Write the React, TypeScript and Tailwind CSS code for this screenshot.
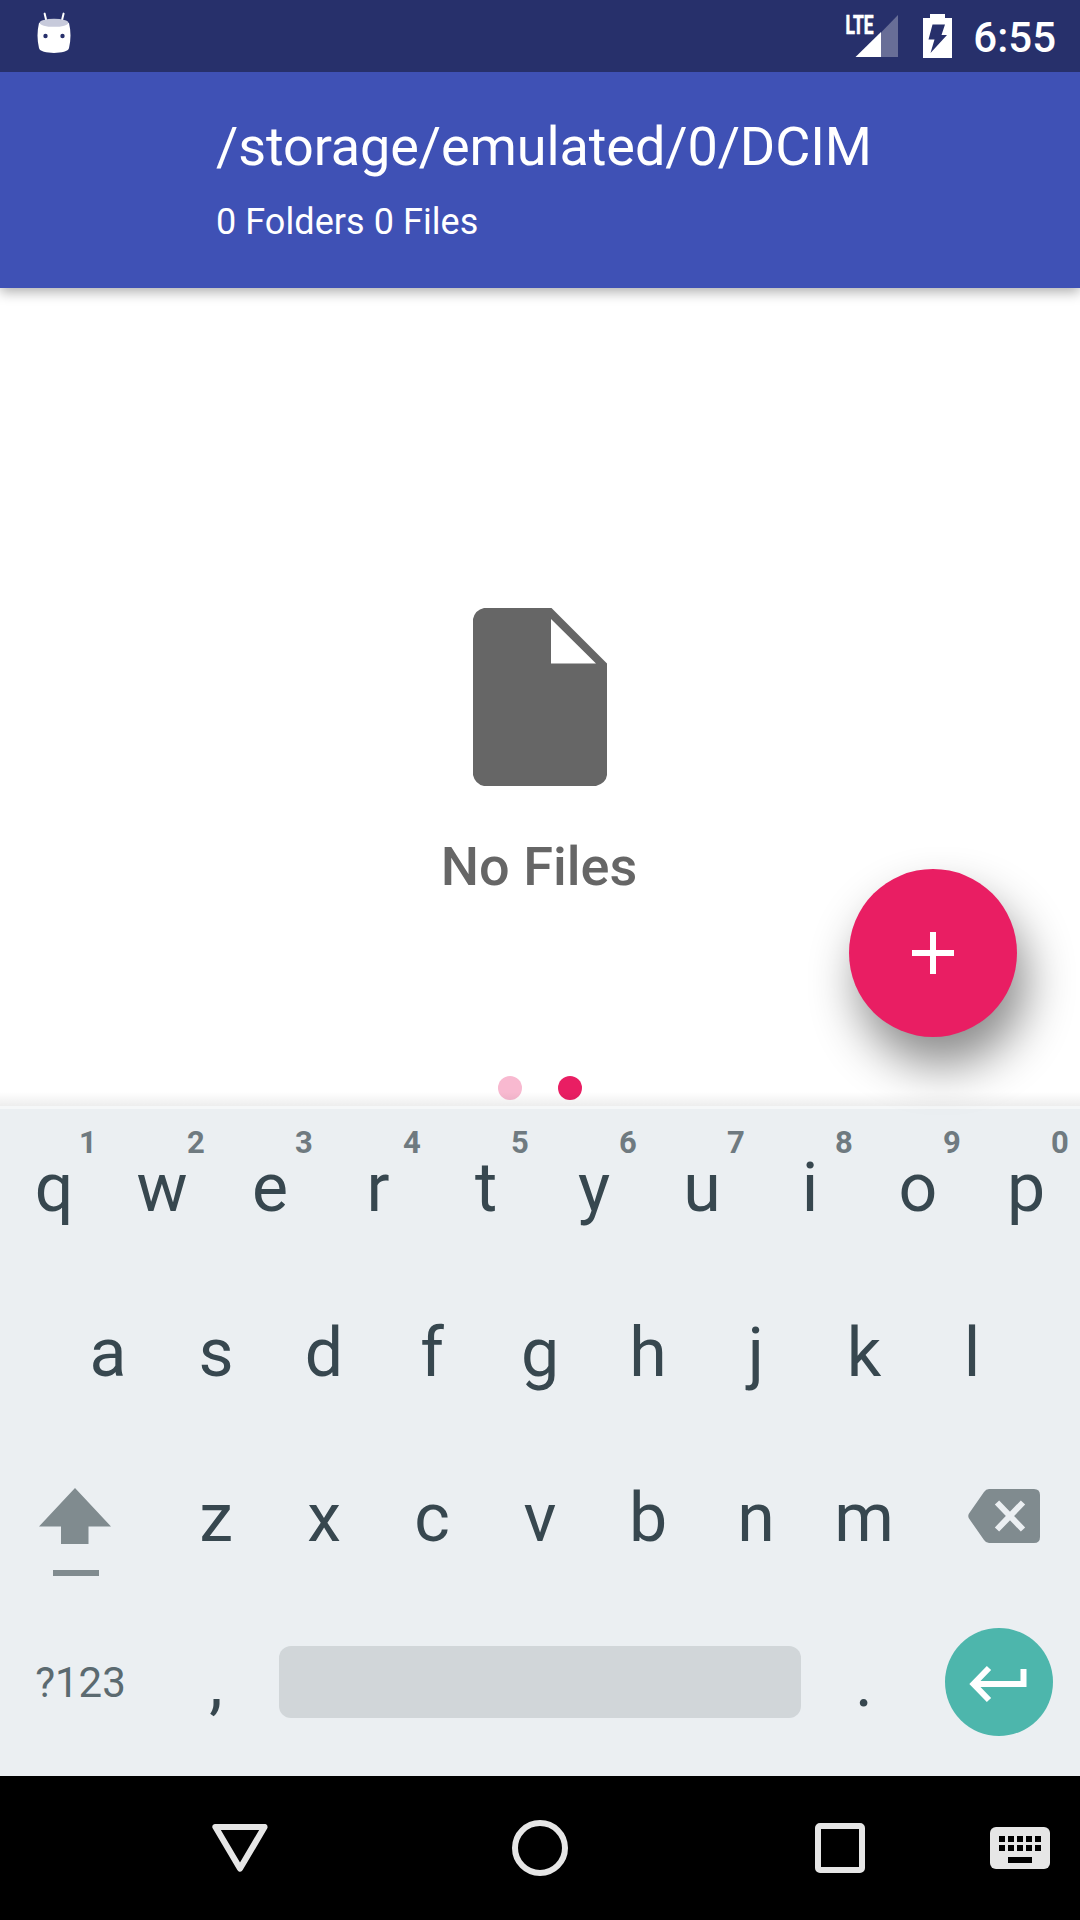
import type { ReactNode } from "react";

const TOP_ROW = ["q", "w", "e", "r", "t", "y", "u", "i", "o", "p"];
const HOME_ROW = ["a", "s", "d", "f", "g", "h", "j", "k", "l"];
const BOTTOM_ROW = ["z", "x", "c", "v", "b", "n", "m"];

function Key({ label, hint }: { label: string; hint?: string }) {
  return (
    <div className="relative flex h-full w-[108px] items-center justify-center text-[68px] leading-[80px]">
      {label}
      {hint && (
        <span className="absolute top-[16px] right-0 w-[40px] text-center text-[31px] leading-[36px] font-bold text-[#6f7a80]">
          {hint}
        </span>
      )}
    </div>
  );
}

function KeyRow({ children }: { children: ReactNode }) {
  return <div className="flex h-[157px] items-center justify-center">{children}</div>;
}

function StatusBar() {
  return (
    <div className="relative z-20 flex h-[72px] items-center justify-between bg-[#27306b] pr-[24px] pl-[36px]">
      <svg width="36" height="44" viewBox="0 0 36 44" className="mb-[4px]">
        <path d="M8.6 1.6 10.4 9M27.6 1.6 25.8 9" stroke="#fff" strokeWidth="2" strokeLinecap="round" />
        <path d="M3 11C1 19 1 28 3 36C4 42.500 32 42.500 33 36C35 28 35 19 33 11Z" fill="#fff" />
        <ellipse cx="18" cy="10.800" rx="14.500" ry="4" fill="#c7cadb" />
        <circle cx="9.500" cy="24" r="2.200" fill="#27306b" />
        <circle cx="26.500" cy="24" r="2.200" fill="#27306b" />
      </svg>
      <div className="flex items-center">
        <svg width="56" height="64" viewBox="0 -10 56 64" className="mr-[23px]">
          <text
            x="1.500"
            y="19.500"
            textLength="28"
            lengthAdjust="spacingAndGlyphs"
            fill="#fff"
            stroke="#fff"
            strokeWidth="0.700"
            fontSize="26"
            fontWeight="700"
            fontFamily="Roboto, sans-serif"
          >
            LTE
          </text>
          <path d="M37 18.500 54 1V43H37Z" fill="#686e97" />
          <path d="M37 18V43H11.500Z" fill="#fff" />
        </svg>
        <svg width="29" height="44" viewBox="0 0 29 44" className="mr-[21px]">
          <path d="M7 0H22V4H29V44H0V4H7Z" fill="#fff" />
          <path d="M9.500 10.500H22L18.500 21H24L7.500 39L11.500 25.500H5.500Z" fill="#27306b" />
        </svg>
        <span className="mt-[3px] text-[42px] leading-[50px] font-medium text-white">6:55</span>
      </div>
    </div>
  );
}

function Header() {
  return (
    <header className="relative z-10 flex h-[216px] flex-col bg-[#3f51b5] pt-[43px] pl-[216px] text-white shadow-[0_4px_12px_rgba(0,0,0,0.32)]">
      <h1 className="text-[54px] leading-[64px] tracking-[-0.1px]">/storage/emulated/0/DCIM</h1>
      <p className="mt-[22px] text-[36px] leading-[42px] tracking-[0.06px]">0 Folders 0 Files</p>
    </header>
  );
}

function EmptyFolder() {
  return (
    <main className="relative flex h-[818px] flex-col items-center pt-[320px]">
      <svg width="134" height="178" viewBox="0 0 134 178">
        <path
          fill="#666"
          fillRule="evenodd"
          d="M11 0H78.500L134 55.500V167Q133 175 123 178H11Q2 176 0 167V11Q2 2 11 0ZM78 11V55.500H123Z"
        />
      </svg>
      <p className="mt-[49px] pr-[2px] text-[54px] leading-[64px] font-medium text-[#666]">No Files</p>
      <button
        aria-label="Add"
        className="absolute top-[581px] right-[63px] flex size-[168px] items-center justify-center rounded-full bg-[#e91e63] shadow-[9px_28px_48px_rgba(0,0,0,0.46)]"
      >
        <svg width="42" height="42" viewBox="0 0 42 42">
          <path d="M18 0H24V18H42V24H24V42H18V24H0V18H18Z" fill="#fff" />
        </svg>
      </button>
      <div className="mt-auto flex gap-[36px] pb-[6px]">
        <span className="size-[24px] rounded-full bg-[#f8b9d0]" />
        <span className="size-[24px] rounded-full bg-[#e91e63]" />
      </div>
      <div className="absolute inset-x-0 bottom-0 h-[14px] bg-linear-to-t from-black/7 to-transparent" />
    </main>
  );
}

function Keyboard() {
  return (
    <section className="flex h-[670px] flex-col gap-[8px] border-t-[3px] border-[#f5f7f8] bg-[#ebeff2] text-[#37474f]">
      <KeyRow>
        {TOP_ROW.map((label, i) => (
          <Key key={label} label={label} hint={String((i + 1) % 10)} />
        ))}
      </KeyRow>
      <KeyRow>
        {HOME_ROW.map((label) => (
          <Key key={label} label={label} />
        ))}
      </KeyRow>
      <KeyRow>
        <div className="flex w-[162px] justify-start pl-[39px]">
          <svg width="72" height="88" viewBox="0 0 72 88" className="mt-[28px]">
            <path d="M36 0 72 38.500H49.500V56H22V38.500H0Z" fill="#808b8f" />
            <path d="M14 82H60V88H14Z" fill="#808b8f" />
          </svg>
        </div>
        {BOTTOM_ROW.map((label) => (
          <Key key={label} label={label} />
        ))}
        <div className="flex w-[162px] justify-end pr-[40px]">
          <svg width="72" height="54" viewBox="0 0 72 54" className="-mt-[3px]">
            <path
              d="M21 0H66Q72 0 72 6V48Q72 54 66 54H21Q18 54 16 51L1 29.500Q-.5 27 1 24.500L16 3Q18 0 21 0Z"
              fill="#808b8f"
            />
            <path d="M29 13.500 55 40.500M55 13.500 29 40.500" stroke="#ebeff2" strokeWidth="6" />
          </svg>
        </div>
      </KeyRow>
      <KeyRow>
        <div className="w-[162px] pr-[1px] text-center text-[42px] leading-[50px] text-[#5b6a70]">?123</div>
        <Key label="," />
        <div className="mx-[9px] mb-[2px] h-[72px] w-[522px] rounded-[12px] bg-[#d1d6d9]" />
        <Key label="." />
        <div className="flex w-[162px] justify-end pr-[27px] pb-[2px]">
          <div className="flex size-[108px] items-center justify-center rounded-full bg-[#4db6ac]">
            <svg width="58" height="38" viewBox="0 0 58 38" className="mt-[4px] mr-[2px]">
              <path d="M54.500 4V19H6M20 3 4.500 19 20 35" fill="none" stroke="#fff" strokeWidth="6" />
            </svg>
          </div>
        </div>
      </KeyRow>
    </section>
  );
}

function NavigationBar() {
  return (
    <nav className="flex h-[144px] items-center bg-black pl-[212px]">
      <svg width="56" height="48" viewBox="0 0 56 48">
        <path d="M3.500 3H52.500L28 44.500Z" fill="none" stroke="#e6e6e6" strokeWidth="6.200" strokeLinejoin="round" />
      </svg>
      <div className="ml-[244px] size-[56px] rounded-full border-[6.500px] border-[#e6e6e6]" />
      <div className="ml-[247px] size-[50px] rounded-[5px] border-[6px] border-[#e6e6e6]" />
      <svg width="60" height="42" viewBox="0 0 60 42" className="ml-[125px]">
        <rect width="60" height="42" rx="6" fill="#e6e6e6" />
        <path
          d="M9 9h6v6H9ZM18 9h6v6h-6ZM27 9h6v6h-6ZM36 9h6v6h-6ZM45 9h6v6h-6ZM9 18h6v6H9ZM18 18h6v6h-6ZM27 18h6v6h-6ZM36 18h6v6h-6ZM45 18h6v6h-6ZM18 30h24v6H18Z"
          fill="#000"
        />
      </svg>
    </nav>
  );
}

export default function App() {
  return (
    <div className="flex h-[1920px] w-[1080px] flex-col overflow-hidden bg-white font-[Roboto,sans-serif]">
      <StatusBar />
      <Header />
      <EmptyFolder />
      <Keyboard />
      <NavigationBar />
    </div>
  );
}
